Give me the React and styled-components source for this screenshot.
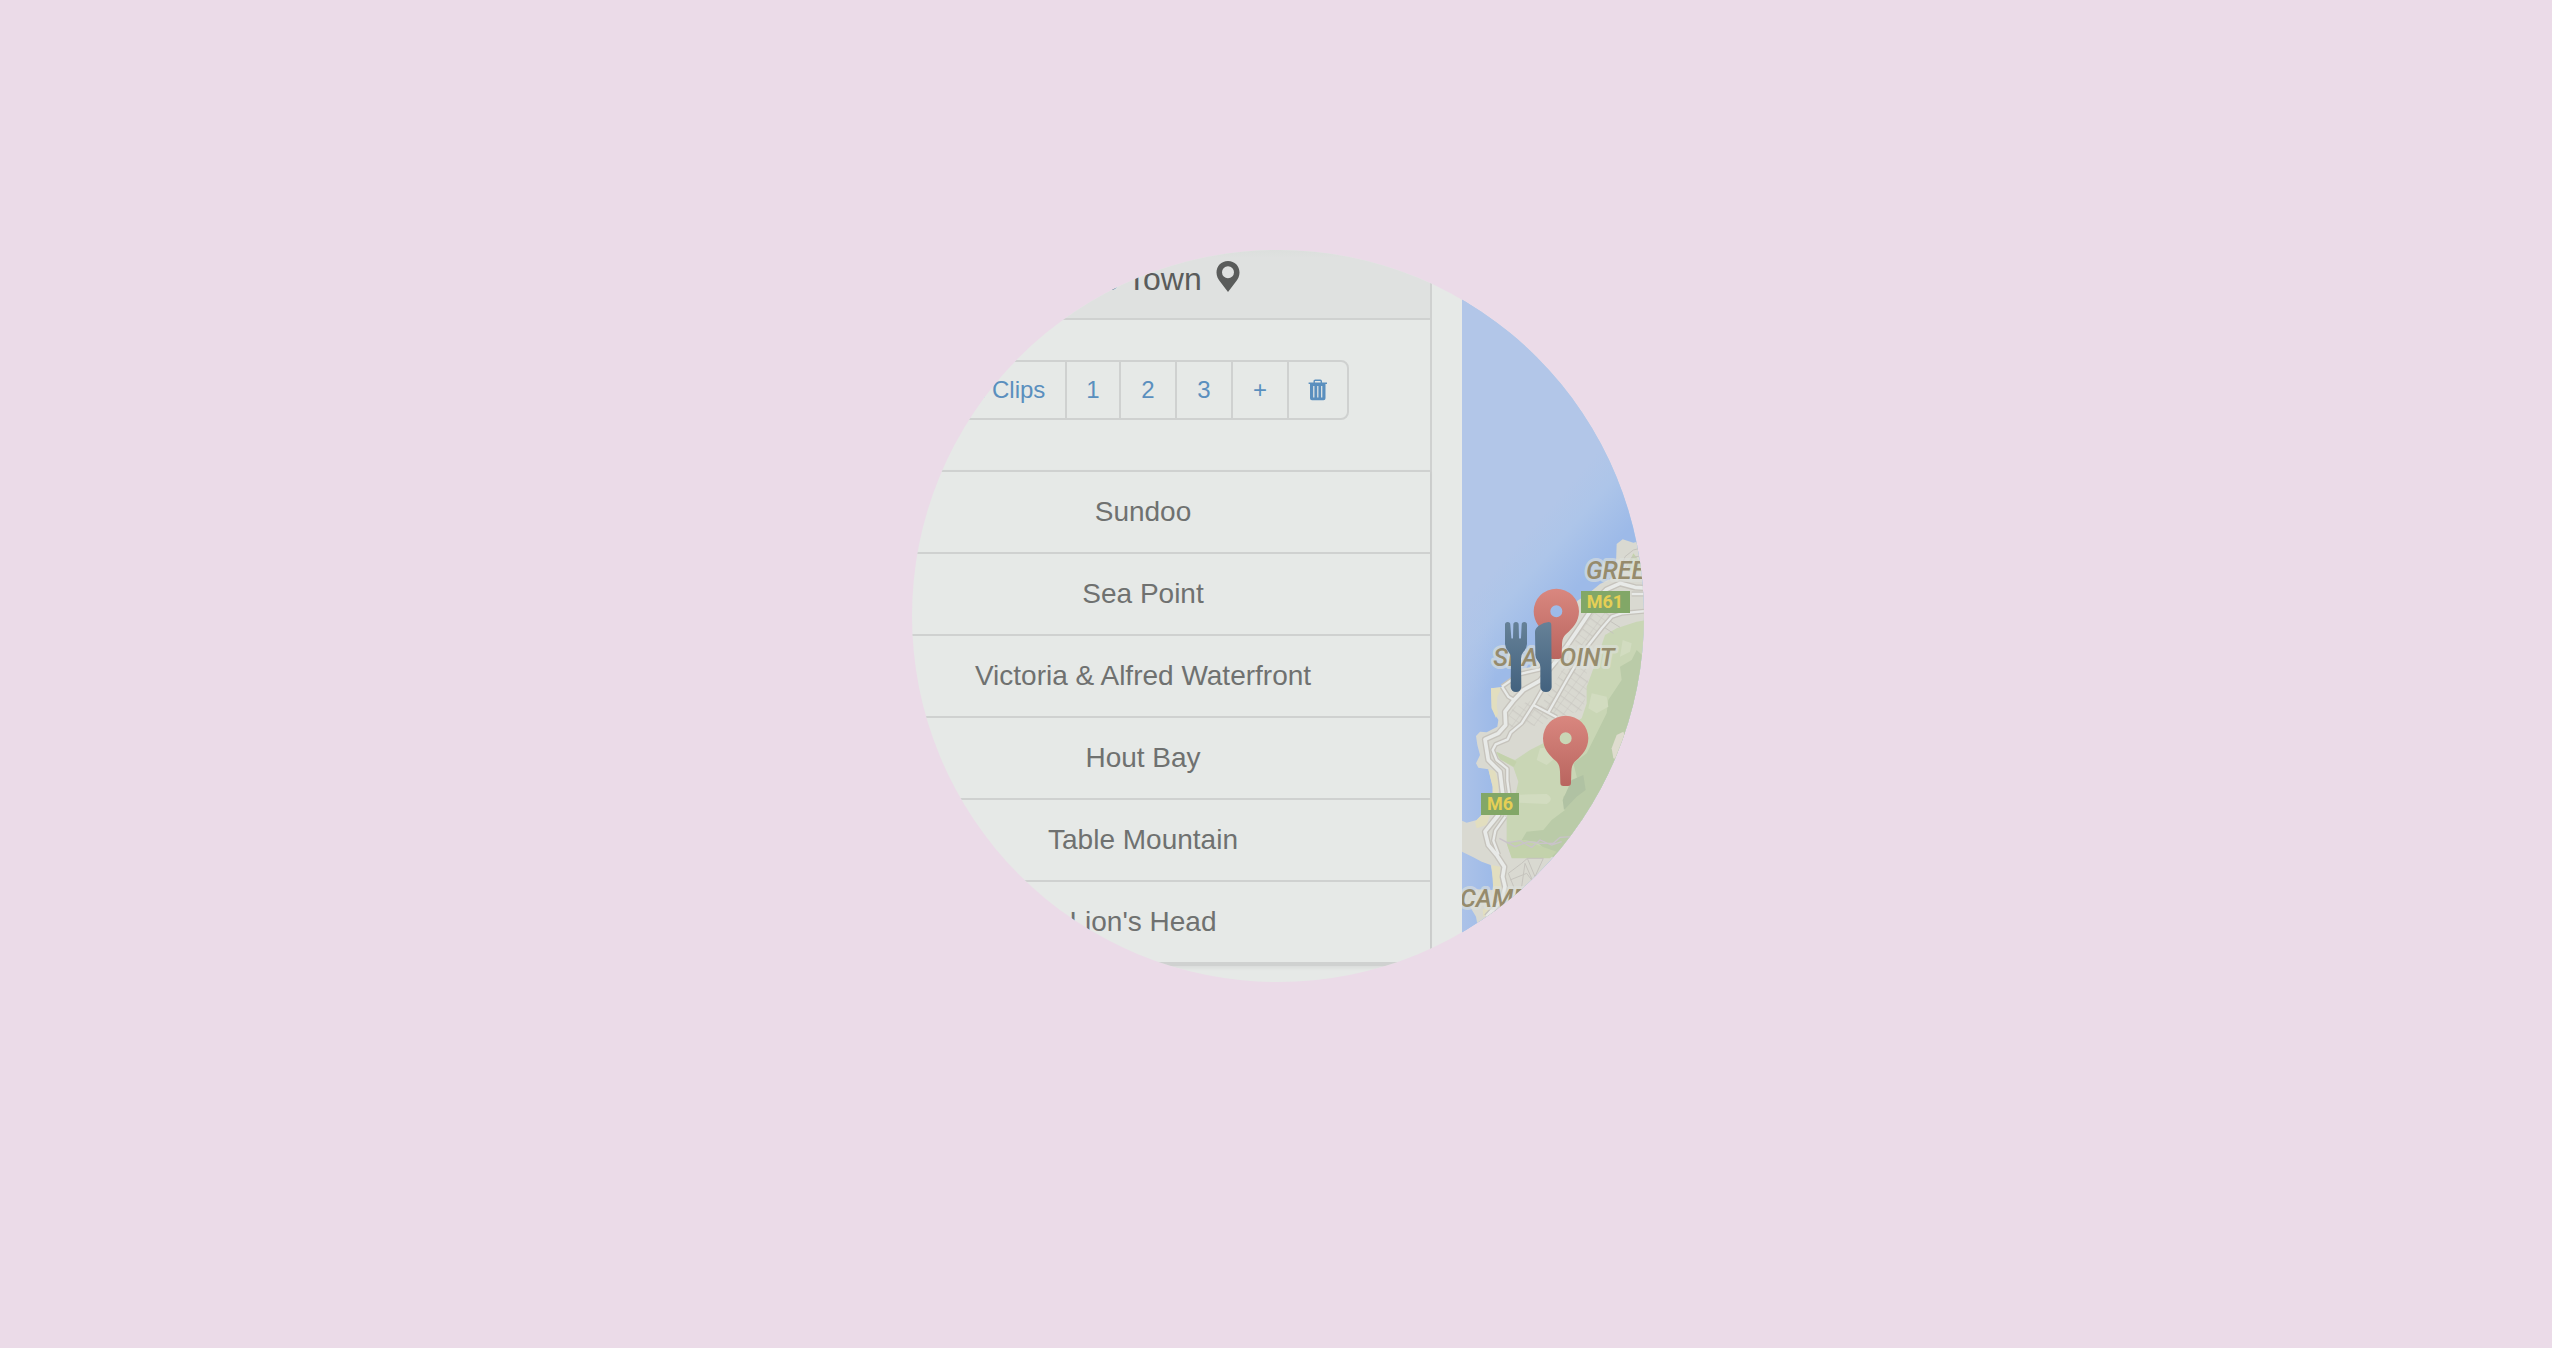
import React from 'react';
import styled, { createGlobalStyle } from 'styled-components';

const GlobalStyle = createGlobalStyle`
  *, *::before, *::after { box-sizing: border-box; }
  body {
    margin: 0;
    background: #ebdbe8;
    font-family: "Liberation Sans", Arial, sans-serif;
  }
`;

const line = '#cfd1d0';
const paper = '#e6e9e7';
const link = '#5a8fbe';

const Page = styled.main`
  min-height: 100vh;
  display: flex;
  justify-content: center;
  align-items: flex-start;
  padding: 250px 0 0 4px;
`;

const Lens = styled.section`
  flex: none;
  width: 732px;
  height: 732px;
  display: flex;
  gap: 30px;
  overflow: hidden;
  border-radius: 50%;
  background: ${paper};
`;

const Sidebar = styled.div`
  flex: none;
  width: 576px;
  margin-left: -56px;
  border-right: 2px solid ${line};
`;

const Header = styled.header`
  display: flex;
  justify-content: center;
  align-items: flex-start;
  gap: 14px;
  height: 70px;
  padding: 11px 4px 0 0;
  background: linear-gradient(#dcdfdd, #dfe1e0 8px);
  border-bottom: 2px solid ${line};
`;

const Title = styled.h1`
  margin: 0;
  font-size: 32px;
  line-height: 36px;
  font-weight: 300;
  color: #5a5c5b;
`;

const Toolbar = styled.div`
  display: flex;
  justify-content: center;
  padding: 40px 0 50px;
`;

const ButtonGroup = styled.div`
  display: grid;
  grid-template-columns: 128px 54px 56px 56px 56px 58px;
  height: 60px;
  border: 2px solid ${line};
  border-radius: 8px;
  overflow: hidden;
`;

const ClipButton = styled.button`
  display: flex;
  align-items: center;
  justify-content: center;
  padding: 0;
  border: 0;
  border-right: ${(p) => (p.$last ? '0' : `2px solid ${line}`)};
  background: transparent;
  font: 24px/28px "Liberation Sans", Arial, sans-serif;
  color: ${link};
  white-space: nowrap;
  cursor: pointer;
`;

const PlaceList = styled.ul`
  margin: 0;
  padding: 0;
  list-style: none;
  border-bottom: 2px solid ${line};
  box-shadow: 0 2px 4px rgba(0, 0, 0, 0.06);
`;

const Place = styled.li`
  border-top: 2px solid ${line};

  &:last-child { border-bottom: 2px solid ${line}; }
`;

const PlaceLink = styled.a`
  display: block;
  padding: 24px 0;
  font-size: 28px;
  line-height: 32px;
  text-align: center;
  text-decoration: none;
  color: #6f7170;
`;

const MapArea = styled.div`
  flex: 1;
  min-width: 0;
  background: #b2c6e8;
`;

const MapSvg = styled.svg`
  display: block;
  width: 100%;
  height: 100%;
`;

const AreaName = styled.text`
  font: italic 500 75px Roboto, sans-serif;
  fill: #968b6c;
  stroke: rgba(222, 225, 220, 0.6);
  stroke-width: 18px;
  stroke-linejoin: round;
  paint-order: stroke;
`;

const RoadName = styled.text`
  font: 700 54px Roboto, sans-serif;
  fill: #e6cf55;
  text-anchor: middle;
`;

const places = ['Sundoo', 'Sea Point', 'Victoria & Alfred Waterfront', 'Hout Bay', 'Table Mountain', "Lion's Head"];

function PinIcon() {
  return (
    <svg width="24" height="32" viewBox="0 0 24 32" aria-hidden="true">
      <path
        fill="#5a5c5b"
        fillRule="evenodd"
        d="M12 0C5.300 0 .5 5 .5 11.500C.5 15 2 18 4 20.500L12 31L20 20.500C22 18 23.500 15 23.500 11.500C23.500 5 18.700 0 12 0ZM12 5.200A6 6 0 1 1 12 17.200A6 6 0 1 1 12 5.200Z"
      />
    </svg>
  );
}

function TrashIcon() {
  return (
    <svg width="20" height="22" viewBox="0 0 20 22" aria-hidden="true">
      <path fill="none" stroke={link} strokeWidth="1.400" d="M6.200 4V2.200Q6.200 1.200 7.200 1.200H12.300Q13.300 1.200 13.300 2.200V4" />
      <path
        fill={link}
        fillRule="evenodd"
        d="M.6 3.600H19V5H17.500V19.300Q17.500 21.300 15.500 21.300H4Q2 21.300 2 19.300V5H.6ZM5.200 7V18.500H6.400V7ZM9.200 7V18.500H10.400V7ZM13.100 7V18.500H14.300V7Z"
      />
    </svg>
  );
}

function MapPin({ x, y }) {
  return (
    <path
      transform={`translate(${x} ${y})`}
      fill="url(#pinFill)"
      fillRule="evenodd"
      d="M-68 0A68 68 0 1 1 68 0C68 32 48 52 32 66C20 76 18 84 17 100L16 134Q16 143 7 143H-7Q-16 143 -16 134L-17 100C-18 84 -20 76 -32 66C-48 52 -68 32 -68 0ZM0 -18A18 18 0 1 0 0 18A18 18 0 1 0 0 -18Z"
    />
  );
}

const roads = [
  { w: 11, d: 'M620 264L585 262L540 250L500 268L478 290L450 335L405 402L355 475L300 542L250 570L222 600L195 635L197 675L175 700L135 718L145 780L180 815L188 880L175 945L135 995L145 1035L170 1065L193 1100L188 1130L195 1160L185 1200L140 1250' },
  { w: 7, d: 'M186 560L240 522L300 508L322 490M186 560L205 590L222 600' },
  { w: 7, d: 'M620 333L545 340L515 350L485 385L430 455L380 540L325 637M350 652L280 615L312 560M280 615L245 670L212 698L203 718L167 733L158 750L170 780L202 806L202 842L208 885M196 950L166 992L160 1022L176 1064' },
  { w: 7, d: 'M575 282L620 282' },
];

function CoastMap() {
  return (
    <MapSvg viewBox="66 -750 546 2196" preserveAspectRatio="xMinYMin slice" role="img" aria-label="Map of Sea Point">
      <defs>
        <linearGradient id="sea" gradientUnits="userSpaceOnUse" x1="195" y1="172" x2="362" y2="319">
          <stop offset="0" stopColor="#b2c6e8" />
          <stop offset="0.4" stopColor="#adc5e9" />
          <stop offset="1" stopColor="#9dbae8" />
        </linearGradient>
        <linearGradient id="seaWest" x1="0" y1="0" x2="1" y2="0">
          <stop offset="0" stopColor="#b2c6e8" stopOpacity="0.7" />
          <stop offset="1" stopColor="#b2c6e8" stopOpacity="0" />
        </linearGradient>
        <linearGradient id="pinFill" x1="0" y1="0" x2="0" y2="1">
          <stop offset="0" stopColor="#d9877f" />
          <stop offset="1" stopColor="#b9655f" />
        </linearGradient>
        <linearGradient id="cutleryFill" gradientUnits="userSpaceOnUse" x1="0" y1="366" x2="0" y2="576">
          <stop offset="0" stopColor="#668197" />
          <stop offset="1" stopColor="#43627f" />
        </linearGradient>
        <pattern id="blocks" width="26" height="40" patternUnits="userSpaceOnUse" patternTransform="rotate(36)">
          <path d="M0 0H26M0 0V40M0 22H26" fill="none" stroke="#c9c7c1" strokeWidth="3" />
        </pattern>
      </defs>

      <rect x="66" y="-750" width="546" height="2196" fill="url(#sea)" />
      <rect x="66" y="-750" width="100" height="2196" fill="url(#seaWest)" />

      <path
        fill="#d9d9d1"
        d="M630 115L580 128L548 118L530 132L528 190L515 235L480 252L440 285L412 302L380 380L330 460L290 485L270 502L245 506L215 530L185 562L153 565L155 625L175 660L172 680L140 697L120 695L108 708L112 735L120 765L108 790L115 803L145 808L158 860L158 900L125 945L110 960L80 968L66 962V1055L100 1072L125 1085L152 1095L160 1140L158 1170L110 1168L80 1180L66 1200L90 1220L108 1250L115 1290L300 1446H630Z"
      />
      <path
        fill="#e2debf"
        d="M153 565L185 562L172 590L170 622L155 625ZM145 808L165 812L177 850L172 900L155 930L140 975L110 985L105 965L125 945L158 900L158 860ZM155 1095L180 1100L182 1165L160 1170ZM128 1228L155 1222L148 1245L130 1250ZM155 625L170 618L174 640L168 654Z"
      />

      <path
        fill="#c9d6b5"
        d="M620 360L590 365L530 385L495 405L480 450L455 520L440 560L440 610L425 655L370 690L310 730L270 750L225 780L165 755L180 778L220 802L235 845L225 890L200 950L200 1030L215 1072L250 1068L330 1072L460 1060L620 700Z"
      />
      <path
        fill="#bacba8"
        d="M612 470L590 450L575 480L540 500L545 540L505 600L500 640L470 700L440 760L400 790L415 850L370 890L375 930L335 960L310 990L260 995L245 1020L290 1025L340 1072L480 1060L620 760Z"
      />
      <path fill="#d2dcc0" d="M455 580L500 590L505 620L470 640L445 625ZM300 745L345 740L350 770L320 795L290 780ZM238 884L320 882Q345 897 320 912L238 908ZM548 420L575 430L570 455L540 470Z" />
      <path fill="#b0c2a3" d="M395 840L430 825L437 870L410 890L372 930L368 900Z" />
      <path fill="#c3d2ab" d="M170 755L230 785L222 800L180 778ZM200 1030L250 1020L350 1055L330 1075L215 1075ZM565 195L580 160L612 200V215H565Z" />
      <path fill="#dfdccf" d="M515 745L530 705L550 695L560 720L540 780L520 775Z" />

      <path
        fill="url(#blocks)"
        d="M445 320L520 345L475 400L430 470L445 540L430 630L380 645L330 650L300 620L350 540L395 450ZM225 620L275 600L330 650L300 680L240 670L200 690L205 640Z"
      />
      <path
        fill="none"
        stroke="#c5c3bd"
        strokeWidth="3"
        d="M545 200L555 170L580 150L620 140M555 205L575 172L620 165M490 380L520 400M505 360L540 382M225 1170L205 1120L245 1090L262 1075L310 1075L285 1130L262 1075M245 1160L255 1090L290 1170M210 1140L260 1120L290 1160"
      />
      <path fill="none" stroke="#c9c3c9" strokeWidth="4" d="M178 1015L225 1040L265 1025L300 1030L340 1030L360 1012L400 1010M205 1028L240 1022L275 1042L300 1020L335 1035L365 1025" />

      {roads.map((r) => (
        <path key={`casing-${r.d}`} d={r.d} fill="none" stroke="#c6c3bc" strokeWidth={r.w + 8} strokeLinejoin="round" />
      ))}
      {roads.map((r) => (
        <path key={r.d} d={r.d} fill="none" stroke="#e8eae8" strokeWidth={r.w} strokeLinejoin="round" />
      ))}

      <AreaName x="438" y="236">GREEN</AreaName>
      <AreaName x="160" y="497">SEA POINT</AreaName>
      <AreaName x="60" y="1220">CAMPS</AreaName>

      <MapPin x={349} y={334} />
      <MapPin x={377} y={715} />

      <rect x="423" y="273" width="147" height="66" fill="#82a767" />
      <RoadName x="495" y="325">M61</RoadName>
      <rect x="123" y="879" width="114" height="66" fill="#82a767" />
      <RoadName x="180" y="930">M6</RoadName>

      <path
        fill="url(#cutleryFill)"
        d="M195 374Q195 366 203 366T211 374L214 414Q216 418 219 414L220 374Q220 366 228 366T236 374L237 414Q240 418 243 414L245 374Q245 366 253 366T261 374V432Q260 446 250 456Q243 464 243 476L244 562Q242 576 228 576T212 562L213 476Q213 464 206 456Q196 446 195 432ZM285 396Q285 385 296 377Q312 367 326 366Q334 366 334 376L335 562Q333 576 318 576T301 562V500Q301 492 294 484Q285 474 286 462Z"
      />
    </MapSvg>
  );
}

export default function App() {
  return (
    <>
      <GlobalStyle />
      <Page>
        <Lens>
          <Sidebar>
            <Header>
              <Title>Cape Town</Title>
              <PinIcon />
            </Header>
            <Toolbar>
              <ButtonGroup role="group" aria-label="Clips">
                <ClipButton type="button">All Clips</ClipButton>
                <ClipButton type="button">1</ClipButton>
                <ClipButton type="button">2</ClipButton>
                <ClipButton type="button">3</ClipButton>
                <ClipButton type="button">+</ClipButton>
                <ClipButton type="button" aria-label="Delete" $last>
                  <TrashIcon />
                </ClipButton>
              </ButtonGroup>
            </Toolbar>
            <PlaceList>
              {places.map((name) => (
                <Place key={name}>
                  <PlaceLink href="#">{name}</PlaceLink>
                </Place>
              ))}
            </PlaceList>
          </Sidebar>
          <MapArea>
            <CoastMap />
          </MapArea>
        </Lens>
      </Page>
    </>
  );
}
